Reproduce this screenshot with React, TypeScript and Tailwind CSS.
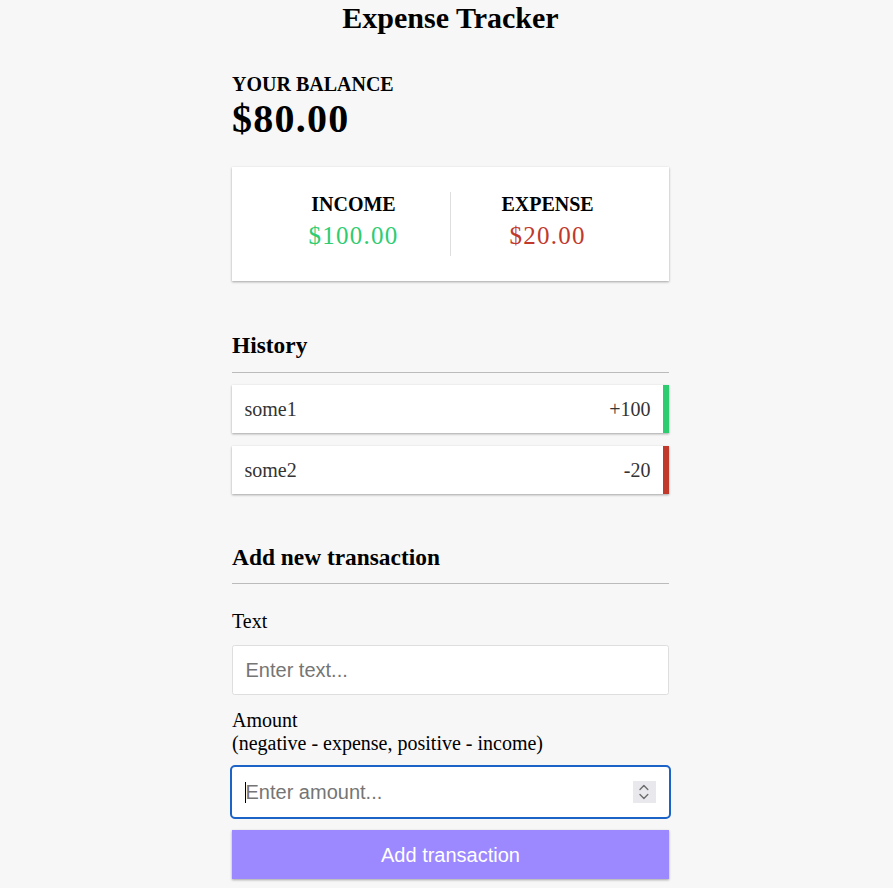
export default function App() {
  const shadow = "shadow-[0_1px_3px_rgba(0,0,0,0.12),0_1px_2px_rgba(0,0,0,0.24)]";
  return (
    <div className="h-screen overflow-hidden bg-[#f7f7f7] pl-2 text-black">
      <div className="mx-auto w-[437px] font-['Liberation_Serif','Times_New_Roman',serif]">
        <h2 className="mt-px text-center text-[30px] font-bold leading-[34px]">Expense Tracker</h2>

        <h4 className="mt-[38px] text-[20px] font-bold uppercase leading-[23px]">Your Balance</h4>
        <h1 className="text-[40px] font-bold leading-[46px] tracking-[1.25px]">$80.00</h1>

        <div className={`mt-[25px] flex h-[114px] bg-white px-[25px] py-[25px] ${shadow}`}>
          <div className="flex-1 border-r border-[#dedede] text-center">
            <h4 className="text-[20px] font-bold uppercase leading-[24px]">Income</h4>
            <p className="mt-[6px] text-[25px] leading-[28px] tracking-[1.25px] text-[#2ecc71]">$100.00</p>
          </div>
          <div className="flex-1 text-center">
            <h4 className="text-[20px] font-bold uppercase leading-[24px]">Expense</h4>
            <p className="mt-[6px] text-[25px] leading-[28px] tracking-[1.25px] text-[#c0392b]">$20.00</p>
          </div>
        </div>

        <h3 className="mt-[51px] border-b border-[#bbbbbb] pb-[13px] text-[23.4px] font-bold leading-[27px]">
          History
        </h3>
        <ul className="mt-[12px] flex flex-col gap-[13px]">
          <li
            className={`flex h-[48px] items-center justify-between border-r-[6px] border-[#2ecc71] bg-white px-[12.5px] text-[20px] leading-[23px] text-[#333333] ${shadow}`}
          >
            <span>some1</span>
            <span>+100</span>
          </li>
          <li
            className={`flex h-[48px] items-center justify-between border-r-[6px] border-[#c0392b] bg-white px-[12.5px] text-[20px] leading-[23px] text-[#333333] ${shadow}`}
          >
            <span>some2</span>
            <span>-20</span>
          </li>
        </ul>

        <h3 className="mt-[50px] border-b border-[#bbbbbb] pb-[12px] text-[23.4px] font-bold leading-[27px]">
          Add new transaction
        </h3>

        <label className="mb-[12px] mt-[25px] block text-[20px] leading-[24px]">Text</label>
        <input
          type="text"
          placeholder="Enter text..."
          className="block h-[50px] w-full rounded-[2.5px] border border-[#dedede] bg-white px-[12.5px] font-['Liberation_Sans',Arial,sans-serif] text-[20px] text-black outline-none placeholder:text-[#757575]"
        />

        <label className="mt-[14px] block text-[20px] leading-[23px]">
          Amount <br />
          (negative - expense, positive - income)
        </label>
        <div className="relative mt-[12px]">
          <input
            type="text"
            placeholder="Enter amount..."
            className="block h-[50px] w-full rounded-[3px] border border-white bg-white px-[12.5px] font-['Liberation_Sans',Arial,sans-serif] text-[20px] text-black outline-2 outline-offset-0 outline-[#1c63c7] outline-solid placeholder:text-[#757575]"
          />
          <span className="pointer-events-none absolute left-[13px] top-[15px] h-[21px] w-px bg-black" />
          <span className="pointer-events-none absolute right-[13.5px] top-[14px] flex h-[22px] w-[22.5px] items-center justify-center bg-[#e9e9ed]">
            <svg width="22" height="22" viewBox="0 0 22 22" fill="none">
              <path d="M7 8.6 L10.9 4.5 L14.8 8.6" stroke="#6e6e6e" strokeWidth="1.4" strokeLinecap="round" strokeLinejoin="round" />
              <path d="M7 13.4 L10.9 17.5 L14.8 13.4" stroke="#6e6e6e" strokeWidth="1.4" strokeLinecap="round" strokeLinejoin="round" />
            </svg>
          </span>
        </div>

        <button
          className={`mt-[13px] block h-[49px] w-full bg-[#9c88ff] font-['Liberation_Sans',Arial,sans-serif] text-[20px] text-white ${shadow}`}
        >
          Add transaction
        </button>
      </div>
    </div>
  );
}
